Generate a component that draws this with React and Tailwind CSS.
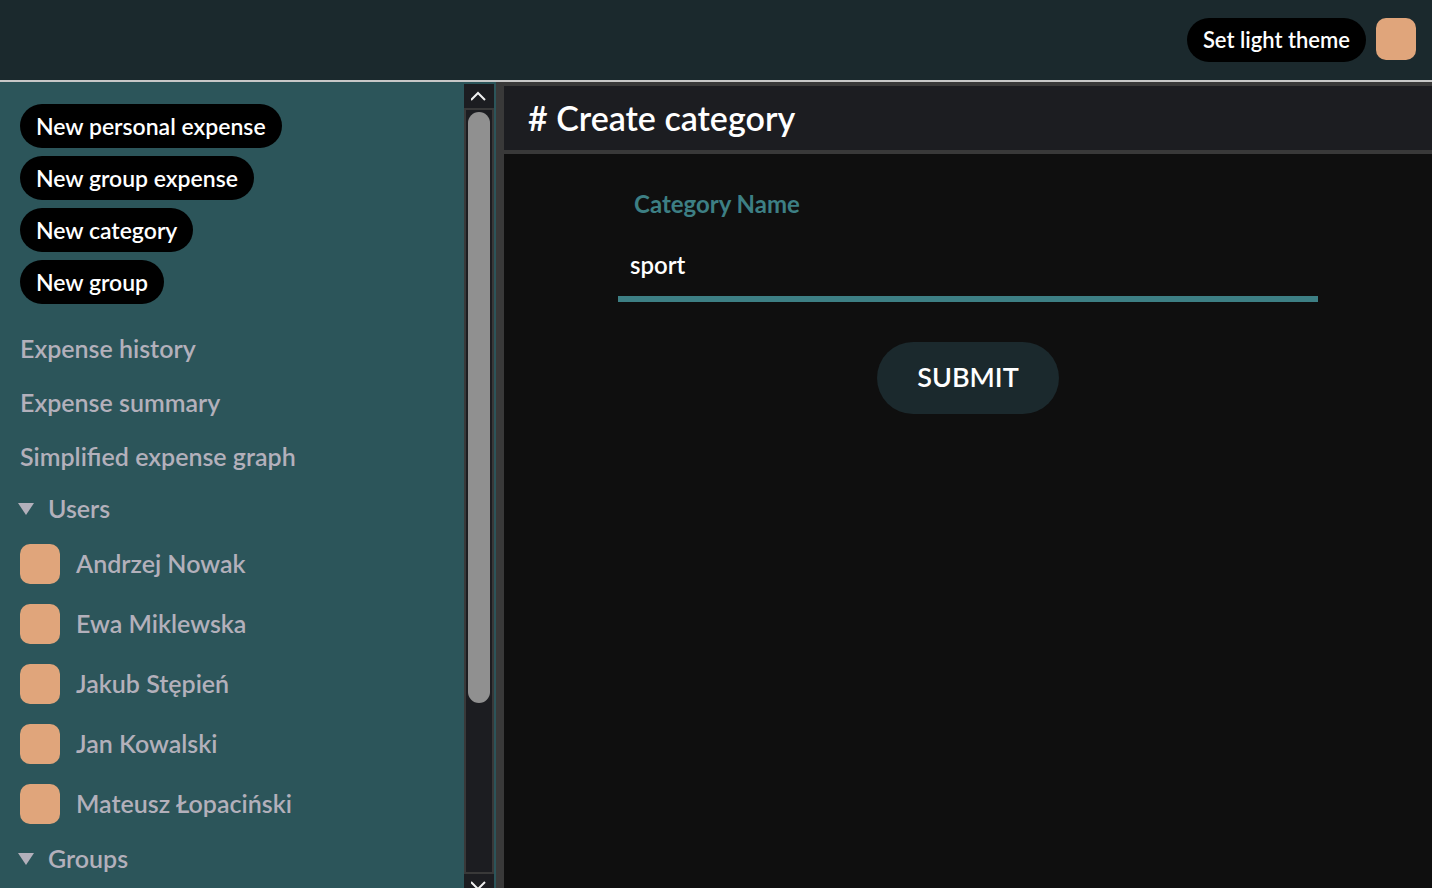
import { useState } from "react";

const actions = ["New personal expense", "New group expense", "New category", "New group"];
const links = ["Expense history", "Expense summary", "Simplified expense graph"];
const users = ["Andrzej Nowak", "Ewa Miklewska", "Jakub Stępień", "Jan Kowalski", "Mateusz Łopaciński"];

function PillButton({ size = "text-[23px]", children }) {
  return (
    <button type="button" className={`flex h-11 items-center whitespace-nowrap rounded-full bg-black px-4 leading-8 text-white ${size}`}>
      {children}
    </button>
  );
}

function SectionSummary({ children }) {
  return (
    <summary className="flex h-[50px] cursor-pointer list-none items-center gap-[14px] pl-[18px]">
      <svg className="h-3 w-4" viewBox="0 0 16 12" fill="currentColor" aria-hidden="true">
        <path d="M0 0H16L8 12Z" />
      </svg>
      <span className="pb-0.5">{children}</span>
    </summary>
  );
}

function ScrollButton({ label, path }) {
  return (
    <button type="button" aria-label={label} className="flex h-6 shrink-0 items-center justify-center bg-[#1c1d21]">
      <svg className="h-4 w-4" viewBox="0 0 16 16" fill="none" stroke="#f0f0f0" strokeWidth="2" aria-hidden="true">
        <path d={path} />
      </svg>
    </button>
  );
}

function Scrollbar() {
  return (
    <div className="mr-[2px] mt-[2px] flex w-[30px] shrink-0 flex-col">
      <ScrollButton label="Scroll up" path="M0 12L7 5L14 12" />
      <div className="grow border-2 border-[#393939] bg-[#1c1d21] p-[2px]">
        <div className="h-[78%] rounded-full bg-[#909090]" />
      </div>
      <ScrollButton label="Scroll down" path="M0 4L7 11L14 4" />
    </div>
  );
}

function Sidebar() {
  return (
    <aside className="flex w-[496px] shrink-0 bg-[#2c555a]">
      <div className="min-w-0 grow pt-[22px] text-[25px] leading-8 text-[#b3b0bb]">
        <div className="flex flex-col items-start gap-2 pl-5">
          {actions.map((a) => (
            <PillButton key={a}>{a}</PillButton>
          ))}
        </div>
        <nav className="mt-[18px] flex flex-col pl-5">
          {links.map((l) => (
            <a key={l} href="#" className="flex h-[54px] items-center pb-0.5">{l}</a>
          ))}
        </nav>
        <details open>
          <SectionSummary>Users</SectionSummary>
          <ul className="pl-5">
            {users.map((u) => (
              <li key={u}>
                <a href="#" className="flex h-[60px] items-center gap-4">
                  <span className="h-10 w-10 rounded-[10px] bg-[#e0a57b]" />
                  <span className="pb-0.5">{u}</span>
                </a>
              </li>
            ))}
          </ul>
        </details>
        <details>
          <SectionSummary>Groups</SectionSummary>
        </details>
      </div>
      <Scrollbar />
    </aside>
  );
}

export default function App() {
  const [name, setName] = useState("sport");
  return (
    <div className="h-screen overflow-hidden bg-[#0f0f0f] font-['Lato',sans-serif] font-semibold">
      <header className="flex h-[82px] items-start justify-end gap-[10px] border-b-2 border-[#c8c8c8] bg-[#1b292d] pr-4 pt-[18px]">
        <PillButton size="text-[22px]">Set light theme</PillButton>
        <button type="button" aria-label="Profile" className="h-[42px] w-10 rounded-[10px] bg-[#e0a57b]" />
      </header>
      <div className="flex h-[calc(100vh-72px)]">
        <Sidebar />
        <main className="min-w-0 grow border-l-8 border-t-4 border-[#393939]">
          <h1 className="flex h-[68px] items-center border-b-4 border-[#393939] bg-[#1c1d21] px-6 text-[34px] leading-10 text-white">
            # Create category
          </h1>
          <form className="mx-auto flex w-full max-w-[700px] flex-col pt-[34px]" onSubmit={(e) => e.preventDefault()}>
            <label htmlFor="category-name" className="pl-4 text-2xl leading-8 font-bold text-[#3d7f84]">Category Name</label>
            <input
              id="category-name"
              type="text"
              value={name}
              onChange={(e) => setName(e.target.value)}
              className="mt-3 h-[70px] w-full border-b-6 border-[#3d7f84] bg-transparent px-3 text-2xl text-white outline-none"
            />
            <button type="submit" className="mt-10 h-[72px] self-center rounded-full bg-[#1b292d] px-10 pb-0.5 text-[27px] text-white">
              SUBMIT
            </button>
          </form>
        </main>
      </div>
    </div>
  );
}
